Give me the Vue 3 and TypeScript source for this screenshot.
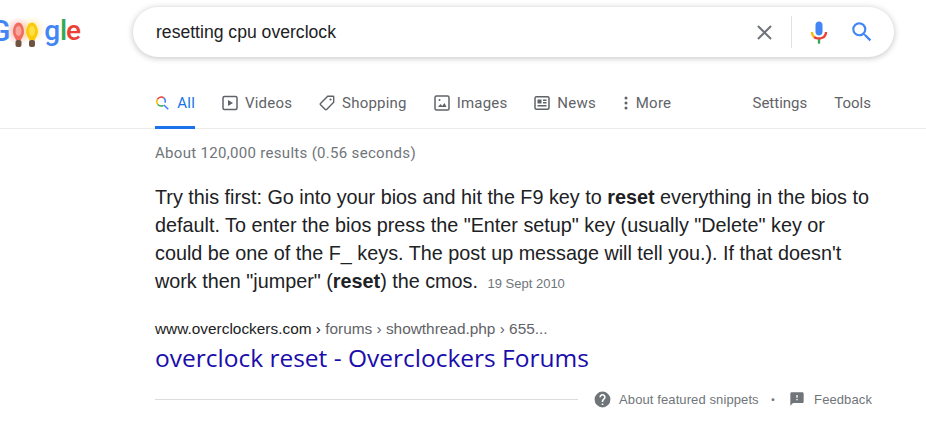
<script setup lang="ts">
interface Tab { label: string; icon: string; active?: boolean }
const tabs: Tab[] = [
  { label: 'All', icon: 'search', active: true },
  { label: 'Videos', icon: 'video' },
  { label: 'Shopping', icon: 'tag' },
  { label: 'Images', icon: 'image' },
  { label: 'News', icon: 'news' },
  { label: 'More', icon: 'more' },
]
</script>

<template>
  <div class="page">
    <header class="top">
      <div class="logo" aria-label="Google">
        <span class="l-g">G</span>
        <svg class="bulbs" width="46" height="42" viewBox="0 0 46 42">
          <defs>
            <radialGradient id="gr"><stop offset="0" stop-color="#f28b82" stop-opacity=".7" /><stop offset="1" stop-color="#f28b82" stop-opacity="0" /></radialGradient>
            <radialGradient id="gy"><stop offset="0" stop-color="#fde293" stop-opacity=".8" /><stop offset="1" stop-color="#fde293" stop-opacity="0" /></radialGradient>
          </defs>
          <circle cx="10.500" cy="14" r="14" fill="url(#gr)" />
          <circle cx="24" cy="13" r="14" fill="url(#gy)" />
          <path d="M10.500 5.500c3.300 0 5.500 5 5.500 9.500 0 3.500-2.300 5.500-3 8H8c-.7-2.500-3-4.500-3-8 0-4.500 2.200-9.500 5.500-9.500z" fill="#ef6c5f" />
          <ellipse cx="10.500" cy="14" rx="3" ry="5" fill="#f8a59b" />
          <rect x="7.500" y="23" width="6" height="7" rx="2" fill="#6d5340" />
          <path d="M24 5.500c3.300 0 6 5 6 9.500 0 3.500-2.600 5.500-3.300 8h-5.400c-.7-2.500-3.300-4.500-3.300-8 0-4.500 2.700-9.500 6-9.500z" fill="#fbcb0a" />
          <ellipse cx="24" cy="14" rx="3" ry="5" fill="#fde047" />
          <rect x="21" y="23" width="6" height="7" rx="2" fill="#6d5340" />
        </svg>
        <span class="letters"><span class="l-b">g</span><span class="l-gr">l</span><span class="l-r">e</span></span>
      </div>
      <div class="search">
        <span class="query">resetting cpu overclock</span>
        <svg class="x" width="25" height="25" viewBox="0 0 24 24"><path d="M19 6.410 17.590 5 12 10.590 6.410 5 5 6.410 10.590 12 5 17.590 6.410 19 12 13.410 17.590 19 19 17.590 13.410 12z" fill="#70757a" /></svg>
        <span class="divider"></span>
        <svg class="mic" width="28" height="28" viewBox="0 0 24 24">
          <path d="M12 15c1.660 0 3-1.310 3-2.970V5.970C15 4.310 13.660 3 12 3S9 4.310 9 5.970v6.060C9 13.690 10.340 15 12 15z" fill="#4285f4" />
          <path d="M11 18.080h2V22h-2z" fill="#34a853" />
          <path d="M7.050 16.870c-1.270-1.330-2.050-2.830-2.050-4.870h2c0 1.450.56 2.420 1.470 3.380l-1.420 1.490z" fill="#fbbc05" />
          <path d="M12 16.500c-1.330 0-2.600-.5-3.530-1.120l-1.420 1.490C8.400 18.100 10.100 18.500 12 18.500c1.900 0 3.700-.7 4.950-1.630 1.270-1.330 2.050-2.830 2.050-4.870h-2c0 1.450-.6 2.420-1.500 3.380-.9.620-2.170 1.120-3.500 1.120z" fill="#ea4335" />
        </svg>
        <svg class="mag" width="26" height="26" viewBox="0 0 24 24"><path d="M15.500 14h-.79l-.28-.27A6.471 6.471 0 0 0 16 9.500 6.500 6.500 0 1 0 9.500 16c1.610 0 3.090-.59 4.230-1.570l.27.28v.79l5 4.990L20.490 19l-4.990-5zm-6 0C7.010 14 5 11.990 5 9.500S7.010 5 9.500 5 14 7.010 14 9.500 11.990 14 9.500 14z" fill="#4285f4" /></svg>
      </div>
    </header>

    <nav class="tabs">
      <div class="tab-list">
        <a v-for="t in tabs" :key="t.label" class="tab" :class="{ active: t.active }">
          <svg v-if="t.icon === 'search'" width="16" height="16" viewBox="0 0 16 16" fill="none" stroke-width="1.700">
            <path d="M9.800 2.100A5.300 5.300 0 0 0 2.600 4" stroke="#ea4335" />
            <path d="M2.600 4a5.300 5.300 0 0 0 .5 5.700" stroke="#fbbc05" />
            <path d="M3.100 9.700a5.300 5.300 0 0 0 6.400.9" stroke="#34a853" />
            <path d="M9.800 2.100a5.300 5.300 0 0 1 1.400 5.700" stroke="#4285f4" />
            <path d="m10 10.200 4.800 4.800" stroke="#4285f4" stroke-width="1.800" />
          </svg>
          <svg v-else-if="t.icon === 'video'" width="16" height="16" viewBox="0 0 16 16" fill="none">
            <rect x="1" y="1.500" width="14" height="13" rx="1.500" stroke="#5f6368" stroke-width="1.500" />
            <path d="M6 5v6l5-3z" fill="#5f6368" />
          </svg>
          <svg v-else-if="t.icon === 'tag'" width="16" height="16" viewBox="0 0 16 16" fill="none">
            <path d="M8.700 1.300H14a.7.7 0 0 1 .7.7v5.300L7.600 14.500a.9.9 0 0 1-1.300 0L1.500 9.700a.9.900 0 0 1 0-1.300z" stroke="#5f6368" stroke-width="1.400" />
            <circle cx="11.500" cy="4.500" r="1.100" fill="#5f6368" />
          </svg>
          <svg v-else-if="t.icon === 'image'" width="16" height="16" viewBox="0 0 16 16" fill="none">
            <rect x="1" y="1" width="14" height="14" rx="1.500" stroke="#5f6368" stroke-width="1.500" />
            <path d="M4 12l2.500-3 1.700 2 2.300-3 2 4z" fill="#5f6368" />
            <circle cx="5.500" cy="5" r="1" fill="#5f6368" />
          </svg>
          <svg v-else-if="t.icon === 'news'" width="16" height="16" viewBox="0 0 16 16" fill="none">
            <rect x="1" y="1.800" width="14" height="12.400" rx="1.500" stroke="#5f6368" stroke-width="1.500" />
            <path d="M3.500 4.500h4v4h-4zM9 4.500h3.500V6H9zM9 7h3.500v1.500H9zM3.500 10h9v1.500h-9z" fill="#5f6368" />
          </svg>
          <svg v-else width="4" height="16" viewBox="0 0 4 16" class="dots">
            <circle cx="2" cy="3" r="1.500" fill="#5f6368" />
            <circle cx="2" cy="8" r="1.500" fill="#5f6368" />
            <circle cx="2" cy="13" r="1.500" fill="#5f6368" />
          </svg>
          <span>{{ t.label }}</span>
        </a>
      </div>
      <div class="tools">
        <a class="tab plain">Settings</a>
        <a class="tab plain">Tools</a>
      </div>
    </nav>

    <main class="results">
      <p class="stats">About 120,000 results (0.56 seconds)</p>
      <p class="snippet">Try this first: Go into your bios and hit the F9 key to <b>reset</b> everything in the bios to default. To enter the bios press the "Enter setup" key (usually "Delete" key or could be one of the F_ keys. The post up message will tell you.). If that doesn't work then "jumper" (<b>reset</b>) the cmos. <span class="date">19 Sept 2010</span></p>
      <div class="crumb">www.overclockers.com › <span class="crumb-rest">forums › showthread.php › 655...</span></div>
      <div class="title">overclock reset - Overclockers Forums</div>
      <div class="foot">
        <span class="rule"></span>
        <svg class="help" width="19" height="19" viewBox="0 0 24 24"><path d="M12 2a10 10 0 1 0 0 20 10 10 0 0 0 0-20zm1 17h-2v-2h2zm2.070-7.750-.9.920C13.450 12.900 13 13.500 13 15h-2v-.5c0-1.100.45-2.100 1.170-2.830l1.240-1.260c.37-.36.590-.86.590-1.410 0-1.100-.9-2-2-2s-2 .9-2 2H8c0-2.210 1.790-4 4-4s4 1.790 4 4c0 .88-.36 1.680-.93 2.250z" fill="#70757a" /></svg>
        <span class="foot-text">About featured snippets</span>
        <span class="dot">•</span>
        <svg width="16" height="16" viewBox="0 0 24 24"><path d="M20 2H4c-1.100 0-2 .9-2 2v18l4-4h14c1.100 0 2-.9 2-2V4c0-1.100-.9-2-2-2zm-7 12h-2v-2h2zm0-4h-2V6h2z" fill="#70757a" /></svg>
        <span class="foot-text fb">Feedback</span>
      </div>
    </main>
  </div>
</template>

<style>
html, body { margin: 0; background: #fff; overflow: hidden; }
</style>

<style scoped>
.page {
  width: 926px;
  height: 426px;
  overflow: hidden;
  font-family: Roboto, "Liberation Sans", sans-serif;
}
.top {
  display: flex;
  align-items: flex-start;
  height: 85px;
  box-sizing: border-box;
  padding-top: 7px;
}
.logo {
  width: 133px;
  height: 50px;
  display: flex;
  align-items: center;
  overflow: hidden;
  font-family: Roboto, sans-serif;
  font-weight: 500;
  font-size: 30px;
  line-height: 50px;
  letter-spacing: -1.200px;
}
.l-g { color: #4285f4; margin-left: -10px; margin-top: -2px; }
.bulbs { margin-left: -1px; margin-right: -10px; flex: none; margin-top: 11px; }
.letters { margin-top: -2px; font-size: 28px; }
.l-b { color: #4285f4; }
.l-gr { color: #34a853; margin-left: 1px; }
.l-r { color: #ea4335; }
.search {
  width: 761px;
  height: 50px;
  box-sizing: border-box;
  border-radius: 25px;
  background: #fff;
  box-shadow: 0 1px 6px rgba(32, 33, 36, .28);
  display: flex;
  align-items: center;
  padding: 0 19px 0 23px;
}
.query {
  flex: 1;
  font-family: "Liberation Sans", sans-serif;
  font-size: 17.600px;
  color: #202124;
}
.x { margin-right: 14px; }
.divider { width: 1px; height: 32px; background: #dfe1e5; margin-right: 13px; }
.mic { margin-right: 16px; }
.tabs {
  height: 44px;
  box-sizing: border-box;
  padding: 0 55px 0 155px;
  display: flex;
  justify-content: space-between;
  border-bottom: 1px solid #ebebeb;
  position: relative;
}
.tab-list, .tools { display: flex; }
.tab-list { gap: 27px; }
.tools { gap: 27px; }
.tab {
  display: flex;
  align-items: center;
  gap: 7px;
  height: 44px;
  box-sizing: border-box;
  padding-bottom: 8px;
  font-size: 15px;
  color: #5f6368;
  letter-spacing: .2px;
}
.tab.active {
  color: #1a73e8;
  border-bottom: 3px solid #1a73e8;
  padding-bottom: 5px;
  width: 40px;
  gap: 8px;
}
.tab.plain { letter-spacing: 0; }
.dots { margin-right: 1px; margin-left: 1px; }
.results { padding: 0 0 0 155px; width: 717px; }
.stats {
  margin: 0;
  padding-top: 15px;
  font-size: 15px;
  line-height: 18px;
  letter-spacing: .31px;
  color: #70757a;
}
.snippet {
  margin: 21px 0 0;
  font-family: "Liberation Sans", sans-serif;
  font-size: 19.800px;
  line-height: 28px;
  color: #202124;
}
.snippet b { color: #202124; }
.date { font-size: 13px; color: #70757a; margin-left: 4px; }
.crumb {
  margin-top: 21px;
  font-family: "Liberation Sans", sans-serif;
  font-size: 15.400px;
  line-height: 20px;
  color: #202124;
}
.crumb-rest { color: #5f6368; }
.title {
  margin-top: 5px;
  font-family: "Open Sans", sans-serif;
  font-size: 24.500px;
  line-height: 28px;
  color: #1a0dab;
}
.foot {
  margin-top: 15px;
  display: flex;
  align-items: center;
  height: 24px;
}
.rule { flex: 1; height: 1px; background: #dadce0; margin-right: 14.500px; }
.foot-text {
  font-family: "Liberation Sans", sans-serif;
  font-size: 13px;
  letter-spacing: .1px;
  color: #70757a;
  margin-left: 7.500px;
}
.dot { color: #70757a; font-size: 13px; margin: 0 14px 0 12px; }
.fb { margin-left: 9px; }
</style>
